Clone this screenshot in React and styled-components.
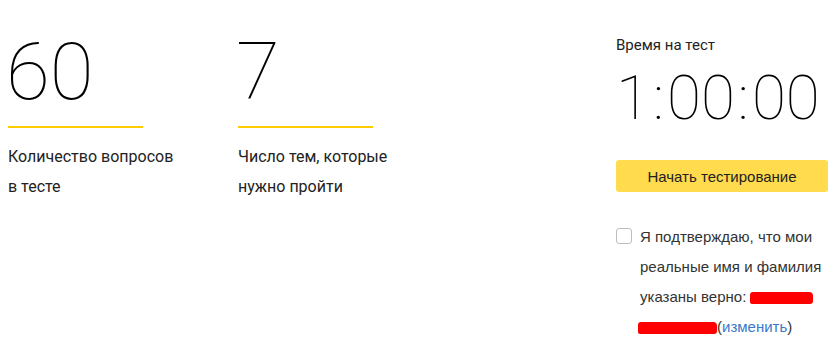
import styled, { createGlobalStyle } from "styled-components";

const Global = createGlobalStyle`
  body {
    margin: 0;
    background: #fff;
    color: #222;
    font-family: Roboto, "Noto Sans", sans-serif;
  }
`;

const Page = styled.div`
  display: flex;
  padding: 32px 7px 0 8px;
`;

const Stat = styled.div`
  width: ${(p) => p.width}px;
  flex-shrink: 0;
`;

const Number = styled.div`
  font-family: Roboto, sans-serif;
  font-weight: 100;
  font-size: 80px;
  line-height: 80px;
  height: 80px;
  color: #000;
  margin-left: -2px;
`;

const Underline = styled.div`
  width: 135px;
  height: 2px;
  margin-top: 14px;
  background: #ffcc00;
`;

const Caption = styled.div`
  margin-top: 14px;
  font-size: 16px;
  line-height: 30px;
  color: #222;
`;

const Side = styled.div`
  width: 212px;
  flex-shrink: 0;
  display: flex;
  flex-direction: column;
`;

const Label = styled.div`
  margin-top: 3px;
  font-size: 15px;
  line-height: 20px;
  color: #222;
`;

const Timer = styled.div`
  margin-top: 12px;
  font-weight: 100;
  font-size: 62px;
  line-height: 62px;
  color: #000;
  display: flex;
  align-items: baseline;
`;

const Colon = styled.span`
  margin: 0 3px;
`;

const StartButton = styled.button`
  margin-top: 31px;
  height: 32px;
  border: 0;
  border-radius: 3px;
  background: #ffdb4d;
  font-family: "Liberation Sans", Arial, sans-serif;
  font-size: 15px;
  color: #222;
  cursor: pointer;
`;

const Confirm = styled.label`
  margin-top: 30px;
  display: flex;
  gap: 8px;
  align-items: flex-start;
`;

const Box = styled.span`
  flex-shrink: 0;
  width: 14px;
  height: 14px;
  margin-top: 6px;
  border: 1px solid #bdbdbd;
  border-radius: 3px;
  background: #fff;
`;

const ConfirmText = styled.span`
  font-family: "Liberation Sans", Arial, sans-serif;
  font-size: 15px;
  line-height: 30px;
  color: #333;
`;

const Redact = styled.span`
  display: inline-block;
  vertical-align: -2px;
  width: ${(p) => p.w}px;
  height: 12px;
  margin-left: ${(p) => p.ml || 0}px;
  background: #f00;
  border-radius: 3px 4px 3px 2px;
`;

const Change = styled.a`
  color: #3a78c9;
  text-decoration: none;
`;

export default function App() {
  return (
    <>
      <Global />
      <Page>
        <Stat width={230}>
          <Number>60</Number>
          <Underline />
          <Caption>
            Количество вопросов
            <br />в тесте
          </Caption>
        </Stat>
        <Stat width={378}>
          <Number>7</Number>
          <Underline />
          <Caption>
            Число тем, которые
            <br />
            нужно пройти
          </Caption>
        </Stat>
        <Side>
          <Label>Время на тест</Label>
          <Timer>
            1<Colon>:</Colon>00<Colon>:</Colon>00
          </Timer>
          <StartButton>Начать тестирование</StartButton>
          <Confirm>
            <Box />
            <ConfirmText>
              Я подтверждаю, что мои
              <br />
              реальные имя и фамилия
              <br />
              указаны верно: <Redact w={63} />
              <br />
              <Redact w={79} ml={-2} />(<Change href="#">изменить</Change>)
            </ConfirmText>
          </Confirm>
        </Side>
      </Page>
    </>
  );
}
